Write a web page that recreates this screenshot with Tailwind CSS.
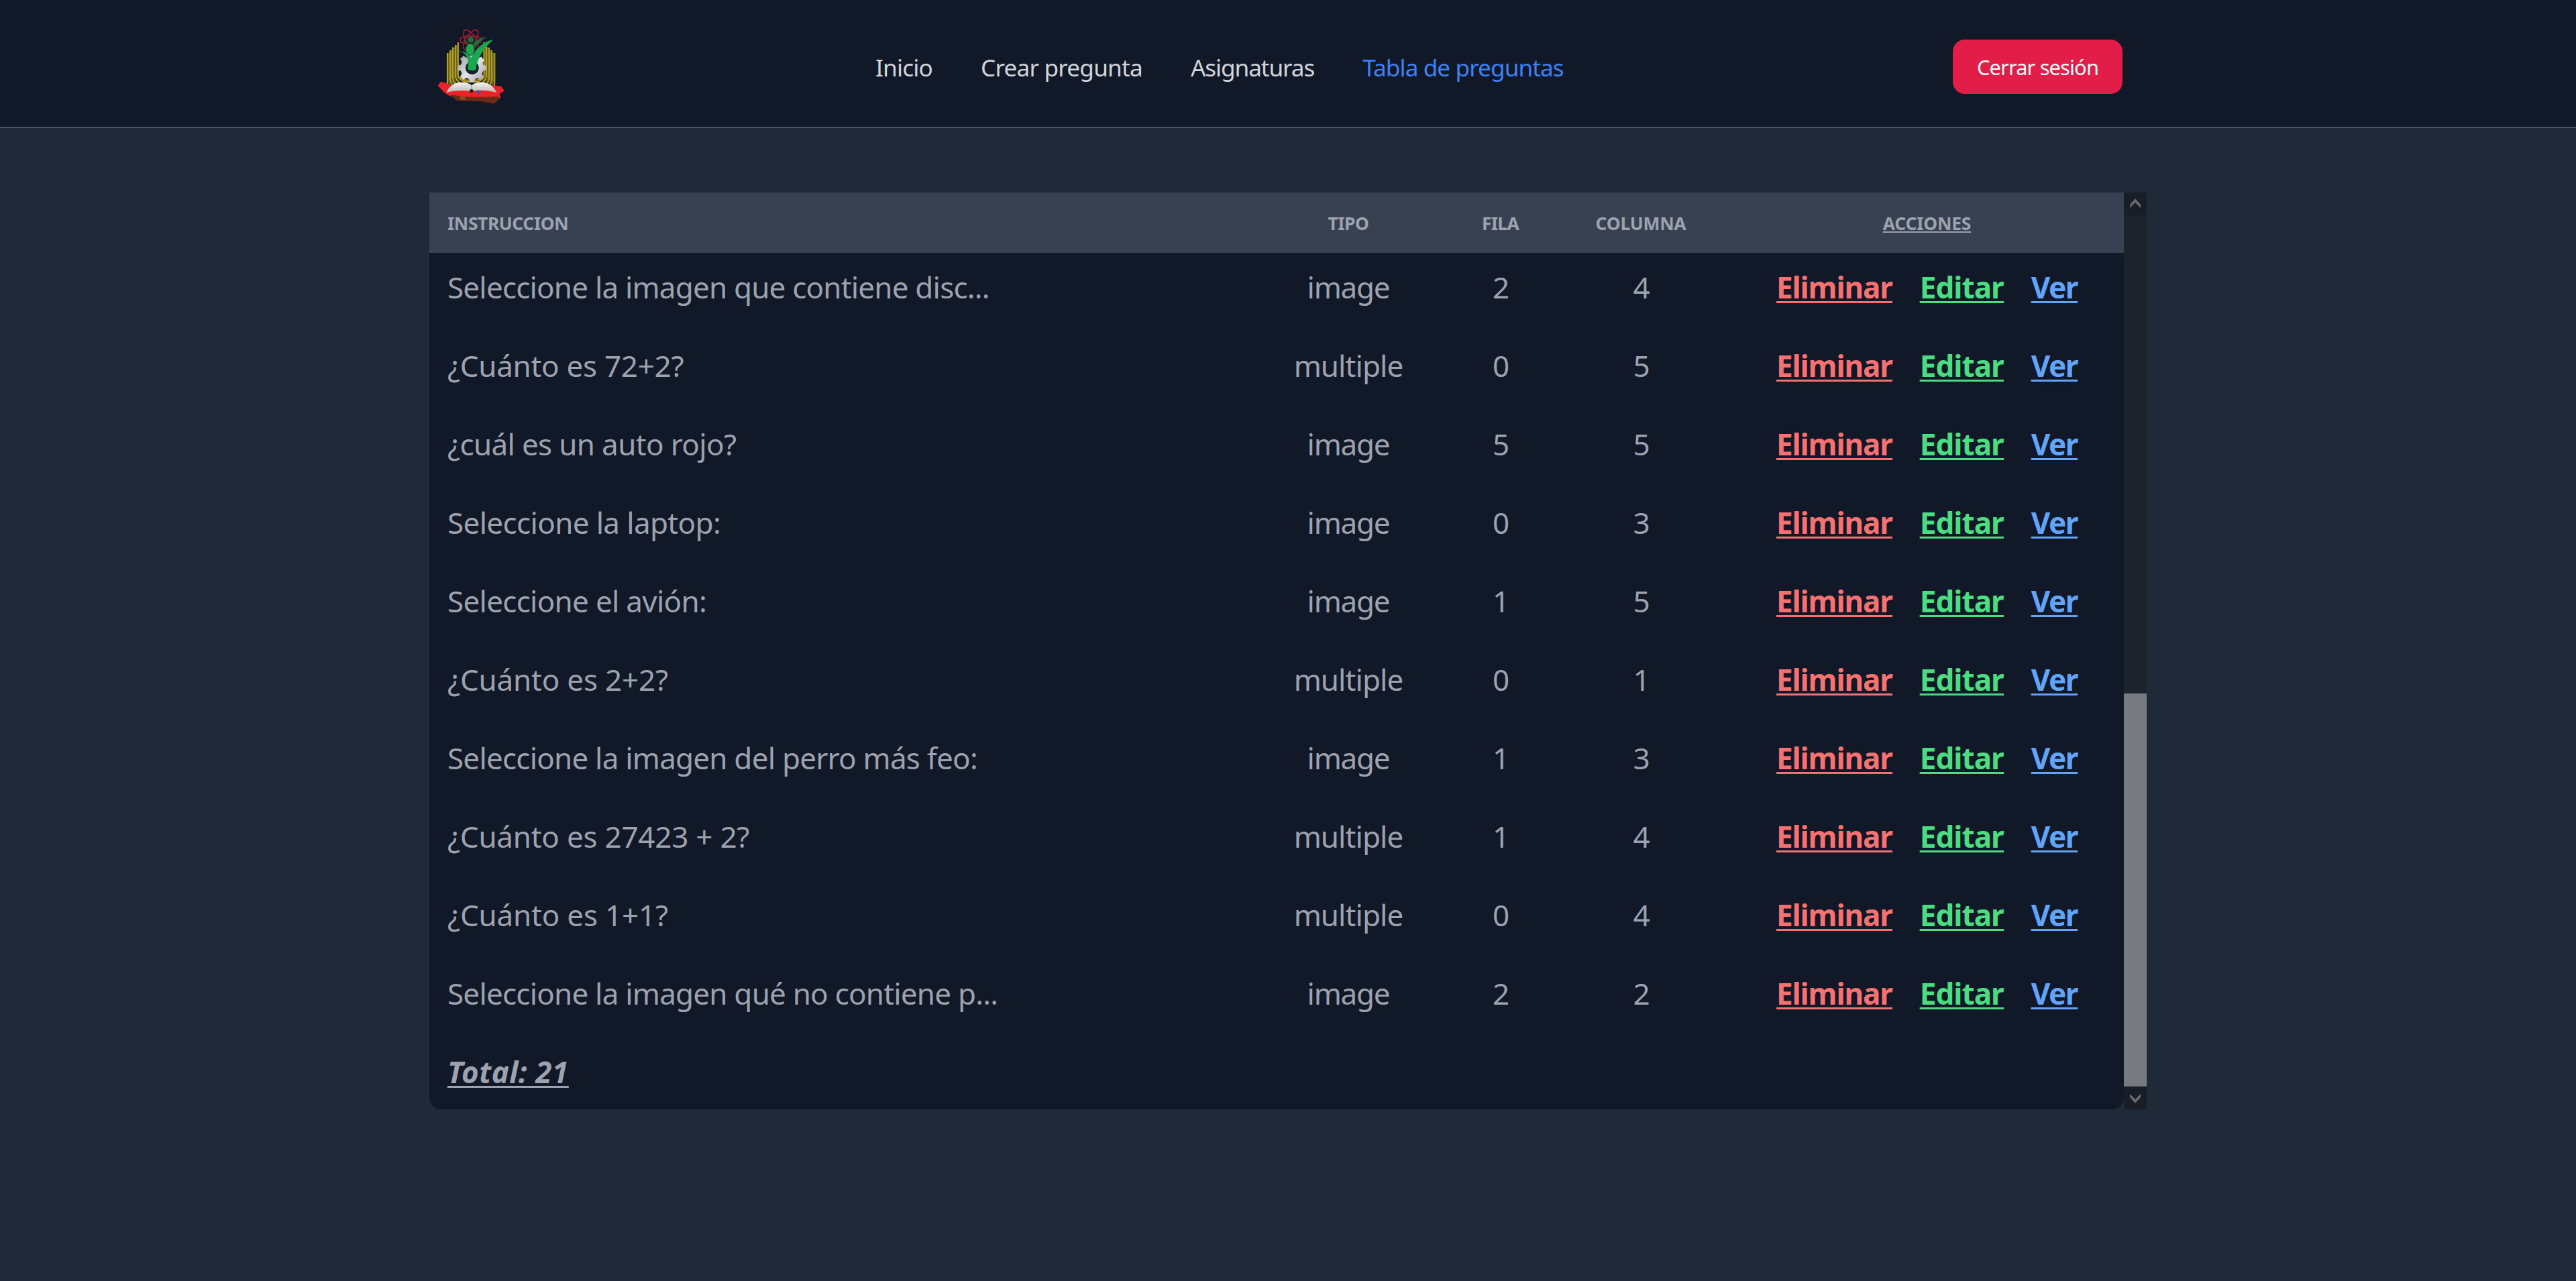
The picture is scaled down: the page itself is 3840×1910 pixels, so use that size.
<!DOCTYPE html>
<html lang="es">
<head>
<meta charset="utf-8">
<title>Tabla de preguntas</title>
<script src="https://cdn.jsdelivr.net/npm/@tailwindcss/browser@4"></script>
</head>
<body class="h-[1910px] overflow-hidden bg-[#1f2937] font-['Noto_Sans',sans-serif] text-[#9ca3af]">
<header class="h-[191px] border-b-2 border-[#4b5563] bg-[#111827]">
  <div class="mx-auto flex h-full w-[2560px] items-center pt-[10px] pr-9 pl-[10px]">
    <svg class="h-[145px] w-[103px] shrink-0 overflow-visible" viewBox="60 20 310 436" fill="none">
      <defs>
        <path id="arcTop" d="M82 113A186 186 0 0 1 362 110"/>
        <path id="arcBottom" d="M74 412A300 300 0 0 0 360 412"/>
        <linearGradient id="page" x1="0" y1="0" x2="0" y2="1"><stop offset="0" stop-color="#f4f4f0"/><stop offset="1" stop-color="#b9b9b4"/></linearGradient>
        <linearGradient id="gear" gradientUnits="userSpaceOnUse" x1="160" y1="190" x2="285" y2="295"><stop offset="0" stop-color="#9a9ca0"/><stop offset=".5" stop-color="#e3e4e6"/><stop offset="1" stop-color="#a2a4a8"/></linearGradient>
      </defs>
      <g fill="#1d1d22" font-size="36" font-family="Liberation Sans, sans-serif">
        <text textLength="312" lengthAdjust="spacingAndGlyphs"><textPath href="#arcTop">Instituto Tecnológico</textPath></text>
        <text textLength="290" lengthAdjust="spacingAndGlyphs"><textPath href="#arcBottom">Superior de Guasave</textPath></text>
      </g>
      <!-- atom -->
      <g stroke="#a8182a" stroke-width="5">
        <ellipse cx="216" cy="118" rx="22" ry="52" transform="rotate(-32 216 118)"/>
        <ellipse cx="216" cy="118" rx="22" ry="52" transform="rotate(32 216 118)"/>
        <ellipse cx="216" cy="118" rx="49" ry="19"/>
      </g>
      <!-- columns -->
      <g stroke="#6f6620" stroke-width="6">
        <path d="M117 176v128q2 22 18 32M129.500 164v130q4 26 18 32M141 151v138q4 26 18 32M153 140v142q6 28 28 34"/>
        <path d="M316 176v128q-2 22-16 32M304 164v130q-4 26-16 32M292 150v138q-4 26-18 32M280 134v148q-4 26-22 34"/>
      </g>
      <g stroke="#b8a41f" stroke-width="6">
        <path d="M111 176v130q0 20 14 30M123.500 164v130q2 26 16 34M135 151v138q4 26 20 34M147 140v142q6 28 30 34M159 128v150q6 26 40 28h38q34-2 38-28V128"/>
        <path d="M323 176v130q0 20-12 30M310 164v130q-2 26-16 34M298 152v138q-4 24-18 32M286 148v136q-6 24-28 30M165 284q8 14 36 14h34q28 0 36-14"/>
      </g>
      <!-- gear -->
      <path d="M211 181h22l3 15 13 5 13-8 15 15-8 13 4 11h12v22l-14 3-5 13 8 13-14 14-14-8-11 4-3 15h-20l-4-15-12-5-13 8-15-14 8-13-5-12-14-4v-20l14-4 5-13-8-13 15-14 13 8 12-5z" fill="url(#gear)"/>
      <circle cx="222" cy="243" r="30" fill="#17202c"/>
      <!-- figures -->
      <g fill="#216b3d">
        <circle cx="216" cy="116" r="14"/>
        <path d="M178 117q20 4 30 20h16q24-30 65-33-34 16-50 44l-17 24-14-22q-8-22-30-33z"/>
      </g>
      <ellipse cx="213" cy="160" rx="23" ry="29" fill="#111827" opacity=".6"/>
      <g fill="#1aa84f">
        <ellipse cx="213" cy="160" rx="19" ry="25"/>
        <path d="M153 170c30-6 52 8 64 28 20-36 52-74 100-82-44 40-62 74-72 104-4 12-6 20-5 29-8 8-28 8-37 0 2-26 0-48-8-60-8-14-22-20-42-19z"/>
      </g>
      <!-- ribbon and book -->
      <path d="M68 324l12-18 22 4 24 12h200l26 4 14 20-22 14 6 14-16 18-170-12-42-10-20-12z" fill="#ee2226"/>
      <path d="M122 364l38 4 60 6 124-2-4 14-20 18-54-10-112-4z" fill="#6d2b17"/>
      <path d="M166 369l26 2v18l-22-4z" fill="#99452a"/>
      <path d="M106 354c14-28 34-44 62-46 24-2 42 4 52 14 12-12 30-16 50-14 30 4 50 20 62 46-34-10-74-14-112-6-36-6-80-4-114 6z" fill="url(#page)"/>
      <path d="M219 318v28" stroke="#9b9b96" stroke-width="3"/>
      <circle cx="219" cy="347" r="8" fill="#1b1b1b"/>
      <path d="M242 344h12l8 18-6-4-6 6-2-8-6-2z" fill="#3b55b5"/>
    </svg>
    <nav class="ml-[552px] flex gap-[72px] pt-px text-[35.2px] leading-[54px] whitespace-nowrap text-[#d1d5db]">
      <a class="tracking-[-0.84px]">Inicio</a>
      <a class="tracking-[-0.81px]">Crear pregunta</a>
      <a class="tracking-[-1.1px]">Asignaturas</a>
      <a class="tracking-[-0.94px] text-[#3b82f6]">Tabla de preguntas</a>
    </nav>
    <button class="ml-auto w-[253px] rounded-[18px] bg-[#e11d48] pt-[19px] pb-[18px] text-[30.8px] leading-[44px] tracking-[-0.84px] whitespace-nowrap text-white">Cerrar sesión</button>
  </div>
</header>

<main class="mx-auto mt-24 flex h-[1367px] w-[2560px]">
  <div class="w-[2526px] overflow-hidden rounded-b-[18px] bg-[#111827]">
    <table class="w-full table-fixed">
      <colgroup><col class="w-[1220px]"><col class="w-[300px]"><col class="w-[155px]"><col class="w-[264px]"><col class="w-[587px]"></colgroup>
      <thead class="bg-[#374151] text-[26.4px] leading-[36px] uppercase">
        <tr>
          <th class="pt-[28px] pb-[26px] pl-[27px] text-left tracking-[-0.4px]">Instruccion</th>
          <th class="pt-[28px] pb-[26px] tracking-[-0.39px]">Tipo</th>
          <th class="pt-[28px] pr-[2px] pb-[26px] tracking-[-0.7px]">Fila</th>
          <th class="pt-[28px] pr-[2px] pb-[26px] tracking-[-0.21px]">Columna</th>
          <th class="pt-[28px] pb-[26px] tracking-[-0.21px] underline decoration-2 underline-offset-[2px]">Acciones</th>
        </tr>
      </thead>
      <tbody id="rows" class="text-center text-[44px] leading-[64px] whitespace-nowrap"></tbody>
    </table>
  </div>
  <div class="flex w-[34px] flex-col justify-between bg-[#1c232b]">
    <div class="h-[34px] bg-[#191d25]">
      <svg class="h-[34px] w-[34px]" viewBox="0 0 34 34" fill="#68696c"><path d="M9 18l8-9 8 9v5l-8-8-8 8z"/></svg>
    </div>
    <div class="mt-auto h-[586px] bg-[#777a81]"></div>
    <div class="h-[34px] bg-[#191d25]">
      <svg class="h-[34px] w-[34px]" viewBox="0 0 34 34" fill="#68696c"><path d="M9 16l8 9 8-9v-5l-8 8-8-8z"/></svg>
    </div>
  </div>
</main>

<script>
const preguntas = [
  ["Seleccione la imagen que contiene disc...", "image", 2, 4, "tracking-[-0.81px]"],
  ["¿Cuánto es 72+2?", "multiple", 0, 5, "tracking-[-0.3px]"],
  ["¿cuál es un auto rojo?", "image", 5, 5, "tracking-[-0.66px]"],
  ["Seleccione la laptop:", "image", 0, 3, "tracking-[-0.65px]"],
  ["Seleccione el avión:", "image", 1, 5, "tracking-[-0.72px]"],
  ["¿Cuánto es 2+2?", "multiple", 0, 1, "tracking-[-0.2px]"],
  ["Seleccione la imagen del perro más feo:", "image", 1, 3, "tracking-[-0.79px]"],
  ["¿Cuánto es 27423 + 2?", "multiple", 1, 4, "tracking-[-0.25px]"],
  ["¿Cuánto es 1+1?", "multiple", 0, 4, "tracking-[-0.2px]"],
  ["Seleccione la imagen qué no contiene p...", "image", 2, 2, "tracking-[-0.79px]"],
];
// The list is scrolled to its end, so the first row sits partly under the header.
document.getElementById("rows").innerHTML = preguntas.map(([texto, tipo, fila, columna, espacio], i) => {
  const pad = i === 0 ? "pt-[19px] pb-[25px]" : "pt-[28px] pb-[25px]";
  return `<tr>
    <td class="${pad} pl-[27px] text-left ${espacio}">${texto}</td>
    <td class="${pad} ${tipo === "image" ? "tracking-[-1.26px]" : "tracking-[-0.93px]"}">${tipo}</td>
    <td class="${pad}">${fila}</td>
    <td class="${pad}">${columna}</td>
    <td class="${pad}"><div class="flex justify-center gap-[41px] font-bold underline decoration-[3px] underline-offset-[4px]">
      <a class="tracking-[-1.1px] text-[#f87171]">Eliminar</a>
      <a class="tracking-[-0.95px] text-[#4ade80]">Editar</a>
      <a class="tracking-[-1.5px] text-[#60a5fa]">Ver</a>
    </div></td>
  </tr>`;
}).join("") + `<tr><td colspan="5" class="pt-[28px] pb-[25px] pl-[27px] text-left font-bold tracking-[0.55px] italic underline decoration-[3px] underline-offset-[4px]">Total: 21</td></tr>`;
</script>
</body>
</html>
